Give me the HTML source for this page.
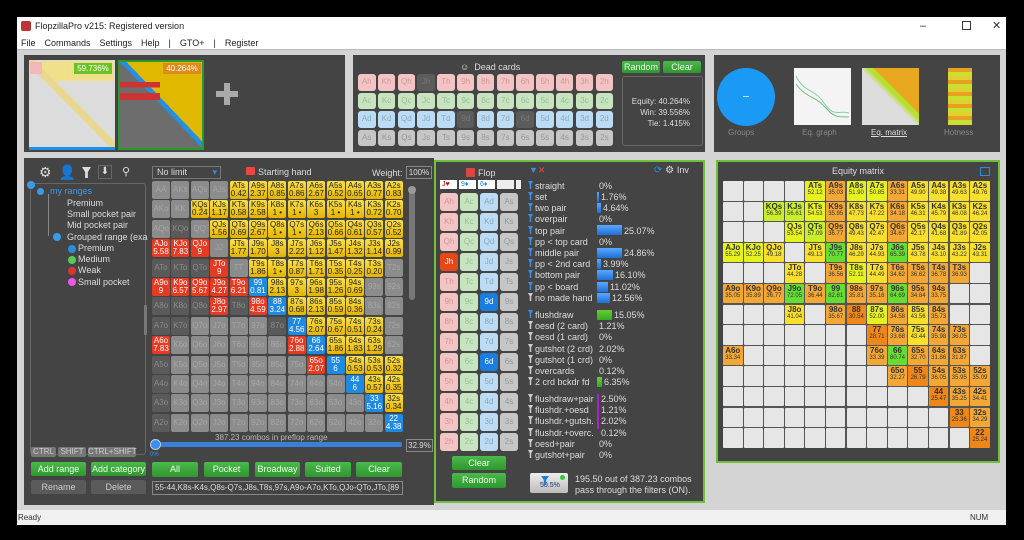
<!DOCTYPE html>
<html><head><meta charset="utf-8"><style>
*{box-sizing:border-box;margin:0;padding:0}
body{width:1024px;height:540px;background:#000;position:relative;overflow:hidden;font-family:"Liberation Sans",sans-serif;font-size:9px;color:#ddd}
.a{position:absolute}
.win{left:17px;top:17px;width:989px;height:508px;background:#d4d4d4}
.pan{background:#444;position:absolute}
.gridH{position:absolute;left:152px;top:181px;display:grid;grid-template-columns:repeat(13,18px);grid-auto-rows:18px;gap:1.4px}
.gridH i,.gridE i,.cards i,.dead i{font-style:normal;text-align:center;border-radius:2px;display:block}
.gridH i{font-size:8px;line-height:8px;padding-top:1px}
.y{background:linear-gradient(#fbe04a,#e4b400);color:#222}
.r{background:#e63a22;color:#fff}
.b{background:#1f8ae2;color:#fff}
.g{background:#8c8c8c;color:#a6a6a6;padding-top:5px!important}
.d{background:#5a5a5a;color:#8a8a8a;padding-top:5px!important}
.gridE{position:absolute;left:723px;top:181px;display:grid;grid-template-columns:repeat(13,19.5px);grid-auto-rows:19.5px;gap:1.1px;background:#555;padding:0}
.gridE i{font-size:8px;line-height:9px;color:#333;font-weight:bold;border-radius:1px}
.gridE i span{font-size:6px;font-weight:normal;display:block;line-height:7px}
.e{background:#e6e6e6}.Y{background:#e6f21e}.F{background:#f7df2c}.O{background:#f3a734}.D{background:#ee8618}.G{background:#66dd33}.L{background:#c9ee2a}
.cards{position:absolute;left:440px;top:193px;display:grid;grid-template-columns:repeat(4,18px);grid-auto-rows:18px;gap:2px 2px}
.cards i{font-size:8px;line-height:18px;border-radius:3px}
.dead{position:absolute;left:358px;top:74px;display:grid;grid-template-columns:repeat(13,17.5px);grid-auto-rows:16.5px;gap:2px 2.3px}
.dead i{font-size:8px;line-height:16px;border-radius:3px}
.h{background:#f4c4c4;color:#c99}.c{background:#c6e5bf;color:#9b9}.dd{background:#bcdcf5;color:#8ab}.s{background:#c6c6c6;color:#999}.k{background:#5c5c5c;color:#777}
.btn{position:absolute;background:linear-gradient(#4cb94c,#2e962e);color:#e8ffe8;font-size:9px;text-align:center;border-radius:2px}
.gbtn{position:absolute;background:#5a5a5a;color:#ccc;font-size:9px;text-align:center;border-radius:2px}
.fl{position:absolute;left:528px;font-size:9px;color:#ddd;white-space:nowrap}
.fl b{display:inline-block;width:5px;height:8px;background:#3d8ee0;margin-right:2px;clip-path:polygon(0 0,100% 0,65% 40%,65% 100%,35% 100%,35% 40%)}
.fl b.w{background:#ccc}
.pc{position:absolute;font-size:9px;color:#ddd}
.bar{position:absolute;height:10px;background:linear-gradient(#5aa8ff,#1f6fd6)}
</style></head><body>
<div class="a win"></div>
<!-- title -->
<div class="a" style="left:17px;top:17px;width:989px;height:19px;background:#fff"></div>
<div class="a" style="left:21px;top:21px;width:10px;height:10px;background:#b33;border-radius:2px"></div>
<div class="a" style="left:35px;top:21px;font-size:9px;color:#222">FlopzillaPro v215: Registered version</div>
<div class="a" style="left:920px;top:20px;font-size:11px;color:#333">–</div>
<div class="a" style="left:962px;top:21px;width:9px;height:9px;border:1px solid #333"></div>
<div class="a" style="left:992px;top:19px;font-size:11px;color:#333">✕</div>
<div class="a" style="left:17px;top:36px;width:989px;height:14px;background:#fff;border-bottom:1px solid #bbb"></div>
<div class="a" style="left:21px;top:38px;font-size:9px;color:#222;word-spacing:2px">File &nbsp;Commands &nbsp;Settings &nbsp;Help &nbsp;| &nbsp;GTO+ &nbsp;| &nbsp;Register</div>
<!-- status -->
<div class="a" style="left:17px;top:510px;width:989px;height:15px;background:#f0f0f0"></div>
<div class="a" style="left:18px;top:513px;font-size:8px;color:#333">Ready</div>
<div class="a" style="left:970px;top:513px;font-size:8px;color:#333">NUM</div>

<!-- top panels -->
<div class="pan" style="left:24px;top:55px;width:321px;height:97px"></div>
<div class="a" style="left:29px;top:60px;width:86px;height:90px;background:#dcdcdc;border-bottom:3px solid #1e90e8"></div>
<div class="a" style="left:42px;top:61px;width:72px;height:20px;background:repeating-linear-gradient(90deg,#f0e08c 0 5px,#dcdcdc 5px 6px)"></div>
<div class="a" style="left:29px;top:60px;width:86px;height:87px;background:linear-gradient(to bottom left,transparent 0 47%,#e8d890 47% 53%,transparent 53%)"></div>
<div class="a" style="left:30px;top:62px;width:12px;height:12px;background:#f4b8b8"></div>
<div class="a" style="left:74px;top:63px;width:38px;height:11px;background:#6ac323;color:#fff;font-size:8px;text-align:center;line-height:11px">59.736%</div>
<div class="a" style="left:118px;top:60px;width:86px;height:90px;border:2px solid #2a9a2a;background:linear-gradient(to bottom left,#e0b800 0 46%,#2590e0 46% 50%,#6d6d6d 50%)"></div>
<div class="a" style="left:120px;top:82px;width:40px;height:18px;background:linear-gradient(#c33 0 30%,transparent 30% 60%,#c33 60%)"></div>
<div class="a" style="left:163px;top:63px;width:38px;height:11px;background:#e08a1c;color:#fff;font-size:8px;text-align:center;line-height:11px">40.264%</div>
<div class="a" style="left:216px;top:91px;width:22px;height:6px;background:#aaa"></div>
<div class="a" style="left:224px;top:83px;width:6px;height:22px;background:#aaa"></div>

<div class="pan" style="left:353px;top:55px;width:352px;height:97px"></div>
<div class="a" style="left:460px;top:62px;font-size:9px;color:#ddd">☺ &nbsp;Dead cards</div>
<div class="dead">
<i class="h">Ah</i><i class="h">Kh</i><i class="h">Qh</i><i class="k">Jh</i><i class="h">Th</i><i class="h">9h</i><i class="h">8h</i><i class="h">7h</i><i class="h">6h</i><i class="h">5h</i><i class="h">4h</i><i class="h">3h</i><i class="h">2h</i>
<i class="c">Ac</i><i class="c">Kc</i><i class="c">Qc</i><i class="c">Jc</i><i class="c">Tc</i><i class="c">9c</i><i class="c">8c</i><i class="c">7c</i><i class="c">6c</i><i class="c">5c</i><i class="c">4c</i><i class="c">3c</i><i class="c">2c</i>
<i class="dd">Ad</i><i class="dd">Kd</i><i class="dd">Qd</i><i class="dd">Jd</i><i class="dd">Td</i><i class="k">9d</i><i class="dd">8d</i><i class="dd">7d</i><i class="k">6d</i><i class="dd">5d</i><i class="dd">4d</i><i class="dd">3d</i><i class="dd">2d</i>
<i class="s">As</i><i class="s">Ks</i><i class="s">Qs</i><i class="s">Js</i><i class="s">Ts</i><i class="s">9s</i><i class="s">8s</i><i class="s">7s</i><i class="s">6s</i><i class="s">5s</i><i class="s">4s</i><i class="s">3s</i><i class="s">2s</i>
</div>
<div class="btn" style="left:622px;top:61px;width:38px;height:12px;line-height:12px">Random</div>
<div class="btn" style="left:663px;top:61px;width:38px;height:12px;line-height:12px">Clear</div>
<div class="a" style="left:622px;top:76px;width:81px;height:70px;border:1px solid #666;border-radius:3px"></div>
<div class="a" style="left:628px;top:96px;font-size:8px;color:#ddd;text-align:right;width:62px;line-height:11px">Equity: 40.264%<br>Win: 39.556%<br>Tie: 1.415%</div>

<div class="pan" style="left:714px;top:55px;width:286px;height:97px"></div>
<div class="a" style="left:717px;top:68px;width:58px;height:58px;border-radius:50%;background:#1a9af5"></div>
<div class="a" style="left:743px;top:96px;width:6px;height:1px;background:#bde"></div>
<div class="a" style="left:794px;top:68px;width:57px;height:57px;background:#f4f4f4"></div>
<svg class="a" style="left:794px;top:68px" width="57" height="57"><path d="M2 8 C10 25 20 20 30 35 S45 42 55 45" stroke="#8cb" fill="none"/><path d="M2 16 C12 30 22 28 32 40 S48 48 55 49" stroke="#7b7" fill="none"/></svg>
<div class="a" style="left:862px;top:68px;width:57px;height:57px;background:linear-gradient(to bottom left,#e8a820 0 40%,#b8e030 40% 45%,#ddd 52%)"></div>
<div class="a" style="left:948px;top:68px;width:24px;height:57px;background:repeating-linear-gradient(#e8a020 0 4px,#c8e030 4px 8px,#e0d030 8px 12px)"></div>
<div class="a" style="left:728px;top:128px;font-size:8px;color:#888">Groups</div>
<div class="a" style="left:802px;top:128px;font-size:8px;color:#888">Eq. graph</div>
<div class="a" style="left:871px;top:128px;font-size:8px;color:#ddd;text-decoration:underline">Eq. matrix</div>
<div class="a" style="left:944px;top:128px;font-size:8px;color:#888">Hotness</div>

<!-- bottom left panel -->
<div class="pan" style="left:24px;top:158px;width:410px;height:347px"></div>
<div class="a" style="left:39px;top:164px;font-size:14px;color:#ddd;letter-spacing:7px">⚙👤</div>
<div class="a" style="left:82px;top:167px;width:9px;height:11px;background:#ddd;clip-path:polygon(0 0,100% 0,65% 45%,65% 100%,35% 100%,35% 45%)"></div>
<div class="a" style="left:98px;top:165px;width:14px;height:14px;border:1px solid #666;color:#ddd;font-size:10px;text-align:center">⬇</div>
<div class="a" style="left:122px;top:165px;font-size:11px;color:#ddd">⚲</div>
<div class="a" style="left:30px;top:183px;width:116px;height:272px;border:1px solid #666;border-radius:3px"></div>
<div class="a" style="left:27px;top:181px;width:8px;height:8px;border-radius:50%;background:#3a9be8"></div>
<div class="a" style="left:37px;top:188px;width:7px;height:7px;border-radius:50%;background:#3a9be8"></div>
<div class="a" style="left:50px;top:186px;font-size:9px;color:#3a9be8">my ranges</div>
<div class="a" style="left:67px;top:198px;font-size:9px;color:#ddd;line-height:11.2px">Premium<br>Small pocket pair<br>Mid pocket pair<br>Grouped range (exa</div>
<div class="a" style="left:53px;top:233px;width:8px;height:8px;border-radius:50%;background:#3a9be8"></div>
<div class="a" style="left:48px;top:194px;width:1px;height:42px;border-left:1px solid #888"></div>
<div class="a" style="left:70px;top:243px;font-size:9px;color:#ddd;line-height:11.2px;padding-left:8px">Premium<br>Medium<br>Weak<br>Small pocket</div>
<div class="a" style="left:68px;top:245px;width:8px;height:8px;border-radius:50%;background:#2a8ee0"></div>
<div class="a" style="left:68px;top:256px;width:8px;height:8px;border-radius:50%;background:#5c5"></div>
<div class="a" style="left:68px;top:267px;width:8px;height:8px;border-radius:50%;background:#d33"></div>
<div class="a" style="left:68px;top:278px;width:8px;height:8px;border-radius:50%;background:#e5e"></div>
<div class="a" style="left:144px;top:305px;width:3px;height:30px;background:#777"></div>
<div class="gbtn" style="left:31px;top:447px;width:25px;height:10px;line-height:10px;font-size:8px;background:#777">CTRL</div>
<div class="gbtn" style="left:58px;top:447px;width:28px;height:10px;line-height:10px;font-size:8px;background:#777">SHIFT</div>
<div class="gbtn" style="left:88px;top:447px;width:48px;height:10px;line-height:10px;font-size:8px;background:#777">CTRL+SHIFT</div>
<div class="btn" style="left:31px;top:462px;width:55px;height:14px;line-height:14px">Add range</div>
<div class="btn" style="left:91px;top:462px;width:55px;height:14px;line-height:14px">Add category</div>
<div class="gbtn" style="left:31px;top:480px;width:55px;height:14px;line-height:14px">Rename</div>
<div class="gbtn" style="left:91px;top:480px;width:55px;height:14px;line-height:14px">Delete</div>

<div class="a" style="left:152px;top:166px;width:69px;height:13px;border:1px solid #777;font-size:9px;color:#ddd;padding-left:4px;line-height:11px">No limit<span style="float:right;color:#2a8ee0;margin-right:3px">▾</span></div>
<div class="a" style="left:246px;top:167px;width:9px;height:8px;background:#e44;border-radius:1px"></div>
<div class="a" style="left:258px;top:167px;font-size:9px;color:#ddd">Starting hand</div>
<div class="a" style="left:372px;top:168px;font-size:9px;color:#ddd">Weight:</div>
<div class="a" style="left:406px;top:166px;width:26px;height:13px;border:1px solid #888;font-size:8px;color:#ddd;text-align:center;line-height:11px">100%</div>
<div class="a" style="left:409px;top:186px;width:6px;height:114px;background:#777;border-radius:3px"></div>
<div class="a" style="left:408px;top:186px;width:8px;height:8px;background:#999;border-radius:50%"></div>

<div class="gridH">
<i class="g">AA</i><i class="g">AKs</i><i class="g">AQs</i><i class="g">AJs</i><i class="y">ATs<br>0.42</i><i class="y">A9s<br>2.37</i><i class="y">A8s<br>0.85</i><i class="y">A7s<br>0.86</i><i class="y">A6s<br>2.67</i><i class="y">A5s<br>0.52</i><i class="y">A4s<br>0.65</i><i class="y">A3s<br>0.77</i><i class="y">A2s<br>0.83</i>
<i class="g">AKo</i><i class="g">KK</i><i class="y">KQs<br>0.24</i><i class="y">KJs<br>1.17</i><i class="y">KTs<br>0.58</i><i class="y">K9s<br>2.58</i><i class="y">K8s<br>1 •</i><i class="y">K7s<br>1 •</i><i class="y">K6s<br>3</i><i class="y">K5s<br>1 •</i><i class="y">K4s<br>1 •</i><i class="y">K3s<br>0.72</i><i class="y">K2s<br>0.70</i>
<i class="g">AQo</i><i class="d">KQo</i><i class="g">QQ</i><i class="y">QJs<br>1.56</i><i class="y">QTs<br>0.69</i><i class="y">Q9s<br>2.67</i><i class="y">Q8s<br>1 •</i><i class="y">Q7s<br>1 •</i><i class="y">Q6s<br>2.13</i><i class="y">Q5s<br>0.66</i><i class="y">Q4s<br>0.61</i><i class="y">Q3s<br>0.57</i><i class="y">Q2s<br>0.52</i>
<i class="r">AJo<br>5.58</i><i class="r">KJo<br>7.83</i><i class="r">QJo<br>9</i><i class="g">JJ</i><i class="y">JTs<br>1.77</i><i class="y">J9s<br>1.70</i><i class="y">J8s<br>3</i><i class="y">J7s<br>2.22</i><i class="y">J6s<br>1.12</i><i class="y">J5s<br>1.47</i><i class="y">J4s<br>1.32</i><i class="y">J3s<br>1.14</i><i class="y">J2s<br>0.99</i>
<i class="d">ATo</i><i class="d">KTo</i><i class="d">QTo</i><i class="r">JTo<br>9</i><i class="g">TT</i><i class="y">T9s<br>1.86</i><i class="y">T8s<br>1 •</i><i class="y">T7s<br>0.87</i><i class="y">T6s<br>1.71</i><i class="y">T5s<br>0.35</i><i class="y">T4s<br>0.25</i><i class="y">T3s<br>0.20</i><i class="g">T2s</i>
<i class="r">A9o<br>9</i><i class="r">K9o<br>6.57</i><i class="r">Q9o<br>5.67</i><i class="r">J9o<br>4.27</i><i class="r">T9o<br>6.21</i><i class="b">99<br>0.81</i><i class="y">98s<br>2.13</i><i class="y">97s<br>3</i><i class="y">96s<br>1.98</i><i class="y">95s<br>1.26</i><i class="y">94s<br>0.69</i><i class="g">93s</i><i class="g">92s</i>
<i class="d">A8o</i><i class="d">K8o</i><i class="d">Q8o</i><i class="r">J8o<br>2.97</i><i class="d">T8o</i><i class="r">98o<br>4.59</i><i class="b">88<br>3.24</i><i class="y">87s<br>0.68</i><i class="y">86s<br>2.13</i><i class="y">85s<br>0.59</i><i class="y">84s<br>0.36</i><i class="g">83s</i><i class="g">82s</i>
<i class="d">A7o</i><i class="d">K7o</i><i class="g">Q7o</i><i class="g">J7o</i><i class="g">T7o</i><i class="g">97o</i><i class="d">87o</i><i class="b">77<br>4.56</i><i class="y">76s<br>2.07</i><i class="y">75s<br>0.67</i><i class="y">74s<br>0.51</i><i class="y">73s<br>0.24</i><i class="g">72s</i>
<i class="r">A6o<br>7.83</i><i class="g">K6o</i><i class="g">Q6o</i><i class="g">J6o</i><i class="g">T6o</i><i class="g">96o</i><i class="g">86o</i><i class="r">76o<br>2.88</i><i class="b">66<br>2.64</i><i class="y">65s<br>1.86</i><i class="y">64s<br>1.83</i><i class="y">63s<br>1.29</i><i class="g">62s</i>
<i class="d">A5o</i><i class="g">K5o</i><i class="g">Q5o</i><i class="g">J5o</i><i class="g">T5o</i><i class="g">95o</i><i class="g">85o</i><i class="g">75o</i><i class="r">65o<br>2.07</i><i class="b">55<br>6</i><i class="y">54s<br>0.53</i><i class="y">53s<br>0.53</i><i class="y">52s<br>0.32</i>
<i class="d">A4o</i><i class="g">K4o</i><i class="g">Q4o</i><i class="g">J4o</i><i class="g">T4o</i><i class="g">94o</i><i class="g">84o</i><i class="g">74o</i><i class="g">64o</i><i class="g">54o</i><i class="b">44<br>6</i><i class="y">43s<br>0.57</i><i class="y">42s<br>0.35</i>
<i class="d">A3o</i><i class="g">K3o</i><i class="g">Q3o</i><i class="g">J3o</i><i class="g">T3o</i><i class="g">93o</i><i class="g">83o</i><i class="g">73o</i><i class="g">63o</i><i class="g">53o</i><i class="g">43o</i><i class="b">33<br>5.16</i><i class="y">32s<br>0.34</i>
<i class="d">A2o</i><i class="g">K2o</i><i class="g">Q2o</i><i class="g">J2o</i><i class="g">T2o</i><i class="g">92o</i><i class="g">82o</i><i class="g">72o</i><i class="g">62o</i><i class="g">52o</i><i class="g">42o</i><i class="g">32o</i><i class="b">22<br>4.38</i>
</div>
<div class="a" style="left:215px;top:433px;font-size:8px;color:#bbb">387.23 combos in preflop range</div>
<div class="a" style="left:153px;top:442px;width:249px;height:5px;background:#3a7fd8;border-radius:2px"></div>
<div class="a" style="left:150px;top:439px;width:11px;height:11px;background:#3a8ef0;border-radius:50%;border:1px solid #bcd"></div>
<div class="a" style="left:150px;top:452px;font-size:6px;color:#3a8ef0">0%</div>
<div class="a" style="left:406px;top:439px;width:27px;height:13px;border:1px solid #888;font-size:8px;color:#ddd;text-align:center;line-height:11px">32.9%</div>
<div class="btn" style="left:152px;top:462px;width:46px;height:15px;line-height:15px">All</div>
<div class="btn" style="left:204px;top:462px;width:45px;height:15px;line-height:15px">Pocket</div>
<div class="btn" style="left:255px;top:462px;width:45px;height:15px;line-height:15px">Broadway</div>
<div class="btn" style="left:305px;top:462px;width:46px;height:15px;line-height:15px">Suited</div>
<div class="btn" style="left:356px;top:462px;width:46px;height:15px;line-height:15px">Clear</div>
<div class="a" style="left:152px;top:481px;width:251px;height:14px;border:1px solid #888;font-size:8px;color:#ddd;line-height:12px;padding-left:2px;overflow:hidden;white-space:nowrap">55-44,K8s-K4s,Q8s-Q7s,J8s,T8s,97s,A9o-A7o,KTo,QJo-QTo,JTo,[89</div>

<!-- flop panel -->
<div class="pan" style="left:434px;top:160px;width:271px;height:343px;border:2px solid #6fbf3a"></div>
<div class="a" style="left:466px;top:168px;width:9px;height:9px;background:#d44;border-radius:1px"></div>
<div class="a" style="left:478px;top:168px;font-size:9px;color:#ddd">Flop</div>
<div class="a" style="left:440px;top:180px;width:17px;height:9px;background:#fff;font-size:7px;color:#c00;line-height:9px;padding-left:2px">J♥</div>
<div class="a" style="left:459px;top:180px;width:17px;height:9px;background:#fff;font-size:7px;color:#28e;line-height:9px;padding-left:2px">9♦</div>
<div class="a" style="left:478px;top:180px;width:17px;height:9px;background:#fff;font-size:7px;color:#28e;line-height:9px;padding-left:2px">6♦</div>
<div class="a" style="left:497px;top:180px;width:17px;height:9px;background:#eee"></div>
<div class="a" style="left:516px;top:180px;width:5px;height:9px;background:#eee"></div>
<div class="cards">
<i class="h">Ah</i><i class="c">Ac</i><i class="dd">Ad</i><i class="s">As</i>
<i class="h">Kh</i><i class="c">Kc</i><i class="dd">Kd</i><i class="s">Ks</i>
<i class="h">Qh</i><i class="c">Qc</i><i class="dd">Qd</i><i class="s">Qs</i>
<i style="background:#e84818;color:#fff">Jh</i><i class="c">Jc</i><i class="dd">Jd</i><i class="s">Js</i>
<i class="h">Th</i><i class="c">Tc</i><i class="dd">Td</i><i class="s">Ts</i>
<i class="h">9h</i><i class="c">9c</i><i style="background:#1a7ee0;color:#fff">9d</i><i class="s">9s</i>
<i class="h">8h</i><i class="c">8c</i><i class="dd">8d</i><i class="s">8s</i>
<i class="h">7h</i><i class="c">7c</i><i class="dd">7d</i><i class="s">7s</i>
<i class="h">6h</i><i class="c">6c</i><i style="background:#1a7ee0;color:#fff">6d</i><i class="s">6s</i>
<i class="h">5h</i><i class="c">5c</i><i class="dd">5d</i><i class="s">5s</i>
<i class="h">4h</i><i class="c">4c</i><i class="dd">4d</i><i class="s">4s</i>
<i class="h">3h</i><i class="c">3c</i><i class="dd">3d</i><i class="s">3s</i>
<i class="h">2h</i><i class="c">2c</i><i class="dd">2d</i><i class="s">2s</i>
</div>
<div class="btn" style="left:452px;top:456px;width:54px;height:14px;line-height:14px">Clear</div>
<div class="btn" style="left:452px;top:473px;width:54px;height:15px;line-height:15px">Random</div>
<div class="a" style="left:529px;top:165px;font-size:9px;color:#e44"><span style="color:#3d8ee0">▼</span>✕</div>
<div class="a" style="left:654px;top:165px;font-size:10px;color:#2a8ee0">⟳<span style="color:#ddd"> ⚙ </span><span style="color:#ddd;font-size:9px">Inv</span></div>

<div class="fl" style="top:181px"><b></b>straight</div><div class="pc" style="left:599px;top:181px">0%</div>
<div class="fl" style="top:192px"><b></b>set</div><div class="bar" style="left:597px;top:192px;width:2px"></div><div class="pc" style="left:601px;top:192px">1.76%</div>
<div class="fl" style="top:203px"><b></b>two pair</div><div class="bar" style="left:597px;top:203px;width:4px"></div><div class="pc" style="left:603px;top:203px">4.64%</div>
<div class="fl" style="top:214px"><b></b>overpair</div><div class="pc" style="left:599px;top:214px">0%</div>
<div class="fl" style="top:226px"><b></b>top pair</div><div class="bar" style="left:597px;top:225px;width:25px"></div><div class="pc" style="left:624px;top:226px">25.07%</div>
<div class="fl" style="top:237px"><b></b>pp &lt; top card</div><div class="pc" style="left:599px;top:237px">0%</div>
<div class="fl" style="top:248px"><b></b>middle pair</div><div class="bar" style="left:597px;top:248px;width:25px"></div><div class="pc" style="left:624px;top:248px">24.86%</div>
<div class="fl" style="top:259px"><b></b>pp &lt; 2nd card</div><div class="bar" style="left:597px;top:259px;width:4px"></div><div class="pc" style="left:603px;top:259px">3.99%</div>
<div class="fl" style="top:270px"><b></b>bottom pair</div><div class="bar" style="left:597px;top:270px;width:16px"></div><div class="pc" style="left:615px;top:270px">16.10%</div>
<div class="fl" style="top:282px"><b></b>pp &lt; board</div><div class="bar" style="left:597px;top:282px;width:11px"></div><div class="pc" style="left:610px;top:282px">11.02%</div>
<div class="fl" style="top:293px"><b class="w"></b>no made hand</div><div class="bar" style="left:597px;top:293px;width:13px"></div><div class="pc" style="left:612px;top:293px">12.56%</div>
<div class="fl" style="top:310px"><b></b>flushdraw</div><div class="bar" style="left:597px;top:310px;width:15px;background:linear-gradient(#6c3,#3a2)"></div><div class="pc" style="left:614px;top:310px">15.05%</div>
<div class="fl" style="top:321px"><b class="w"></b>oesd (2 card)</div><div class="pc" style="left:599px;top:321px">1.21%</div>
<div class="fl" style="top:332px"><b class="w"></b>oesd (1 card)</div><div class="pc" style="left:599px;top:332px">0%</div>
<div class="fl" style="top:344px"><b class="w"></b>gutshot (2 crd)</div><div class="pc" style="left:599px;top:344px">2.02%</div>
<div class="fl" style="top:355px"><b class="w"></b>gutshot (1 crd)</div><div class="pc" style="left:599px;top:355px">0%</div>
<div class="fl" style="top:366px"><b class="w"></b>overcards</div><div class="pc" style="left:599px;top:366px">0.12%</div>
<div class="fl" style="top:377px"><b class="w"></b>2 crd bckdr fd</div><div class="bar" style="left:597px;top:377px;width:5px;background:linear-gradient(#6c3,#3a2)"></div><div class="pc" style="left:604px;top:377px">6.35%</div>
<div class="a" style="left:597px;top:394px;width:2px;height:35px;background:#a2c"></div>
<div class="fl" style="top:394px"><b class="w"></b>flushdraw+pair</div><div class="pc" style="left:601px;top:394px">2.50%</div>
<div class="fl" style="top:405px"><b class="w"></b>flushdr.+oesd</div><div class="pc" style="left:601px;top:405px">1.21%</div>
<div class="fl" style="top:416px"><b class="w"></b>flushdr.+gutsh.</div><div class="pc" style="left:601px;top:416px">2.02%</div>
<div class="fl" style="top:428px"><b class="w"></b>flushdr.+overc.</div><div class="pc" style="left:601px;top:428px">0.12%</div>
<div class="fl" style="top:439px"><b class="w"></b>oesd+pair</div><div class="pc" style="left:599px;top:439px">0%</div>
<div class="fl" style="top:450px"><b class="w"></b>gutshot+pair</div><div class="pc" style="left:599px;top:450px">0%</div>
<div class="a" style="left:530px;top:473px;width:38px;height:20px;background:linear-gradient(#eee,#bbb);border-radius:2px;font-size:7px;color:#236;padding:9px 0 0 10px">50.5%</div>
<div class="a" style="left:541px;top:476px;width:8px;height:9px;background:#1e7ed8;clip-path:polygon(0 0,100% 0,65% 45%,65% 100%,35% 100%,35% 45%)"></div>
<div class="a" style="left:560px;top:475px;width:5px;height:5px;border-radius:50%;background:#3c3"></div>
<div class="a" style="left:575px;top:474px;font-size:9px;color:#ddd;line-height:11px">195.50 out of 387.23 combos<br>pass through the filters (ON).</div>

<!-- equity matrix panel -->
<div class="pan" style="left:716px;top:160px;width:284px;height:303px;border:2px solid #6fbf3a"></div>
<div class="a" style="left:832px;top:166px;font-size:9px;color:#ddd">Equity matrix</div>
<div class="a" style="left:980px;top:167px;width:10px;height:9px;border:1px solid #2a8ee0"></div>
<div class="gridE">
<i class="e"></i><i class="e"></i><i class="e"></i><i class="e"></i><i class="Y">ATs<span>52.12</span></i><i class="O">A9s<span>35.03</span></i><i class="Y">A8s<span>51.90</span></i><i class="Y">A7s<span>50.85</span></i><i class="O">A6s<span>33.31</span></i><i class="F">A5s<span>49.90</span></i><i class="F">A4s<span>49.38</span></i><i class="F">A3s<span>49.63</span></i><i class="F">A2s<span>49.76</span></i>
<i class="e"></i><i class="e"></i><i class="L">KQs<span>56.39</span></i><i class="L">KJs<span>56.61</span></i><i class="Y">KTs<span>54.53</span></i><i class="O">K9s<span>35.95</span></i><i class="F">K8s<span>47.73</span></i><i class="F">K7s<span>47.22</span></i><i class="O">K6s<span>34.18</span></i><i class="F">K5s<span>46.31</span></i><i class="F">K4s<span>45.79</span></i><i class="F">K3s<span>46.08</span></i><i class="F">K2s<span>46.24</span></i>
<i class="e"></i><i class="e"></i><i class="e"></i><i class="Y">QJs<span>53.54</span></i><i class="L">QTs<span>57.09</span></i><i class="O">Q9s<span>36.77</span></i><i class="F">Q8s<span>49.43</span></i><i class="F">Q7s<span>42.47</span></i><i class="O">Q6s<span>34.67</span></i><i class="F">Q5s<span>42.17</span></i><i class="F">Q4s<span>41.68</span></i><i class="F">Q3s<span>41.89</span></i><i class="F">Q2s<span>42.05</span></i>
<i class="Y">AJo<span>55.29</span></i><i class="Y">KJo<span>52.25</span></i><i class="F">QJo<span>49.18</span></i><i class="e"></i><i class="F">JTs<span>49.13</span></i><i class="G">J9s<span>70.77</span></i><i class="F">J8s<span>46.29</span></i><i class="F">J7s<span>44.93</span></i><i class="G">J6s<span>65.39</span></i><i class="F">J5s<span>43.78</span></i><i class="F">J4s<span>43.10</span></i><i class="F">J3s<span>43.22</span></i><i class="F">J2s<span>43.31</span></i>
<i class="e"></i><i class="e"></i><i class="e"></i><i class="F">JTo<span>44.28</span></i><i class="e"></i><i class="O">T9s<span>36.56</span></i><i class="Y">T8s<span>52.11</span></i><i class="F">T7s<span>44.49</span></i><i class="O">T6s<span>34.62</span></i><i class="O">T5s<span>36.62</span></i><i class="O">T4s<span>36.78</span></i><i class="O">T3s<span>36.93</span></i><i class="e"></i>
<i class="O">A9o<span>35.05</span></i><i class="O">K9o<span>35.89</span></i><i class="O">Q9o<span>36.77</span></i><i class="G">J9o<span>72.05</span></i><i class="O">T9o<span>36.44</span></i><i class="G">99<span>82.81</span></i><i class="O">98s<span>35.81</span></i><i class="O">97s<span>35.16</span></i><i class="G">96s<span>64.69</span></i><i class="O">95s<span>34.64</span></i><i class="O">94s<span>33.75</span></i><i class="e"></i><i class="e"></i>
<i class="e"></i><i class="e"></i><i class="e"></i><i class="F">J8o<span>41.04</span></i><i class="e"></i><i class="O">98o<span>35.67</span></i><i class="D">88<span>30.54</span></i><i class="Y">87s<span>52.00</span></i><i class="O">86s<span>34.58</span></i><i class="F">85s<span>43.56</span></i><i class="O">84s<span>35.73</span></i><i class="e"></i><i class="e"></i>
<i class="e"></i><i class="e"></i><i class="e"></i><i class="e"></i><i class="e"></i><i class="e"></i><i class="e"></i><i class="D">77<span>28.71</span></i><i class="O">76s<span>33.68</span></i><i class="F">75s<span>43.44</span></i><i class="O">74s<span>35.98</span></i><i class="O">73s<span>36.05</span></i><i class="e"></i>
<i class="O">A6o<span>33.34</span></i><i class="e"></i><i class="e"></i><i class="e"></i><i class="e"></i><i class="e"></i><i class="e"></i><i class="O">76o<span>33.39</span></i><i class="G">66<span>80.74</span></i><i class="O">65s<span>32.70</span></i><i class="O">64s<span>31.86</span></i><i class="O">63s<span>31.87</span></i><i class="e"></i>
<i class="e"></i><i class="e"></i><i class="e"></i><i class="e"></i><i class="e"></i><i class="e"></i><i class="e"></i><i class="e"></i><i class="O">65o<span>32.27</span></i><i class="D">55<span>26.79</span></i><i class="O">54s<span>36.05</span></i><i class="O">53s<span>35.95</span></i><i class="O">52s<span>35.09</span></i>
<i class="e"></i><i class="e"></i><i class="e"></i><i class="e"></i><i class="e"></i><i class="e"></i><i class="e"></i><i class="e"></i><i class="e"></i><i class="e"></i><i class="D">44<span>25.47</span></i><i class="O">43s<span>35.25</span></i><i class="O">42s<span>34.41</span></i>
<i class="e"></i><i class="e"></i><i class="e"></i><i class="e"></i><i class="e"></i><i class="e"></i><i class="e"></i><i class="e"></i><i class="e"></i><i class="e"></i><i class="e"></i><i class="D">33<span>25.36</span></i><i class="O">32s<span>34.29</span></i>
<i class="e"></i><i class="e"></i><i class="e"></i><i class="e"></i><i class="e"></i><i class="e"></i><i class="e"></i><i class="e"></i><i class="e"></i><i class="e"></i><i class="e"></i><i class="e"></i><i class="D">22<span>25.24</span></i>
</div>
</body></html>
